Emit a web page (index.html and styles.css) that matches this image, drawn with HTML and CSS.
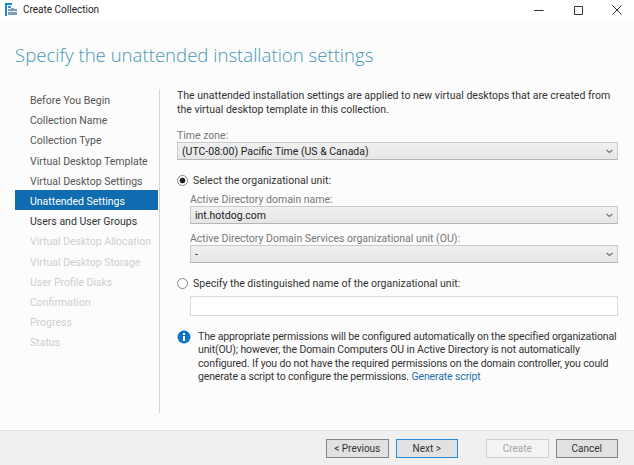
FILE: index.html
```html
<!DOCTYPE html>
<html lang="en">
<head>
    <meta charset="UTF-8">
    <meta name="viewport" content="width=device-width, initial-scale=1.0">
    <title>Create Collection</title>
    <link rel="stylesheet" href="styles.css">
</head>
<body>
    <div class="wizard">
        <div class="titlebar">
            <svg class="app-icon" width="13" height="13" viewBox="0 0 13 13">
                <path d="M0 0h7v2H2v11H0z" fill="#1f86d2"/>
                <path d="M3 3h3v2H3z" fill="#2f93dc"/>
                <path d="M6 6V5h3v1h3v6H3V6z" fill="#7f9db3"/>
                <path d="M3 8h9v1H3z" fill="#dfe8ee"/>
            </svg>
            <span class="titlebar-text">Create Collection</span>
            <div class="window-buttons">
                <svg width="10" height="10" viewBox="0 0 10 10"><path d="M0 5.5h9.500" stroke="#333" fill="none"/></svg>
                <svg width="10" height="10" viewBox="0 0 10 10"><path d="M1.500 1.500h8v8h-8z" stroke="#333" fill="none"/></svg>
                <svg width="10" height="10" viewBox="0 0 10 10"><path d="M.5.5l9 9M9.500.5l-9 9" stroke="#333" fill="none"/></svg>
            </div>
        </div>

        <div class="content">
            <h1>Specify the unattended installation settings</h1>
            <div class="columns">
                <ul class="steps">
                    <li>Before You Begin</li>
                    <li>Collection Name</li>
                    <li>Collection Type</li>
                    <li>Virtual Desktop Template</li>
                    <li>Virtual Desktop Settings</li>
                    <li class="current">Unattended Settings</li>
                    <li class="next">Users and User Groups</li>
                    <li class="off">Virtual Desktop Allocation</li>
                    <li class="off">Virtual Desktop Storage</li>
                    <li class="off">User Profile Disks</li>
                    <li class="off">Confirmation</li>
                    <li class="off">Progress</li>
                    <li class="off">Status</li>
                </ul>

                <div class="panel">
                    <p class="intro">The unattended installation settings are applied to new virtual desktops that are created from the virtual desktop template in this collection.</p>

                    <div class="field tz">
                        <div class="field-label">Time zone:</div>
                        <div class="combo">(UTC-08:00) Pacific Time (US &amp; Canada)<svg class="chev" width="7" height="5" viewBox="0 0 7 5"><path d="M.5 1l3 2.500L6.500 1" stroke="#777" stroke-width="1.300" fill="none"/></svg></div>
                    </div>

                    <div class="radio-row first">
                        <span class="radio checked"></span>
                        <span>Select the organizational unit:</span>
                    </div>
                    <div class="indent">
                        <div class="field">
                            <div class="field-label">Active Directory domain name:</div>
                            <div class="combo">int.hotdog.com<svg class="chev" width="7" height="5" viewBox="0 0 7 5"><path d="M.5 1l3 2.500L6.500 1" stroke="#777" stroke-width="1.300" fill="none"/></svg></div>
                        </div>
                        <div class="field second">
                            <div class="field-label">Active Directory Domain Services organizational unit (OU):</div>
                            <div class="combo">-<svg class="chev" width="7" height="5" viewBox="0 0 7 5"><path d="M.5 1l3 2.500L6.500 1" stroke="#777" stroke-width="1.300" fill="none"/></svg></div>
                        </div>
                    </div>

                    <div class="radio-row another">
                        <span class="radio"></span>
                        <span>Specify the distinguished name of the organizational unit:</span>
                    </div>
                    <div class="indent">
                        <div class="textbox"></div>
                    </div>

                    <div class="note">
                        <svg class="info" width="14" height="14" viewBox="0 0 14 14">
                            <circle cx="7" cy="7" r="6.500" fill="#0f73c4"/>
                            <rect x="6" y="3" width="2" height="2" fill="#fff"/>
                            <rect x="6" y="6" width="2" height="5" fill="#fff"/>
                        </svg>
                        <p>The appropriate permissions will be configured automatically on the specified organizational unit(OU); however, the Domain Computers OU in Active Directory is not automatically configured. If you do not have the required permissions on the domain controller, you could generate a script to configure the permissions. <a href="#">Generate script</a></p>
                    </div>
                </div>
            </div>
        </div>

        <div class="footer">
            <button class="btn" type="button">&lt; Previous</button>
            <button class="btn default" type="button">Next &gt;</button>
            <button class="btn disabled create" type="button">Create</button>
            <button class="btn" type="button">Cancel</button>
        </div>
    </div>
</body>
</html>
```

FILE: styles.css
```css
* {
    box-sizing: border-box;
}

html, body {
    margin: 0;
    height: 100%;
}

body {
    font-family: Roboto, "Open Sans", sans-serif;
    font-size: 10.5px;
    color: #333;
    background-color: #fcfcfc;
    overflow: hidden;
}

.wizard {
    display: flex;
    flex-direction: column;
    height: 465px;
}

.titlebar {
    display: flex;
    align-items: center;
    height: 22px;
    flex: none;
    padding: 0 0 3px 5px;
    background-color: #fff;
    color: #222;
}

.titlebar-text {
    margin-left: 5px;
    font-size: 10px;
}

.window-buttons {
    display: flex;
    gap: 29px;
    margin-left: auto;
    margin-right: 12px;
}

.content {
    flex: 1;
    min-height: 0;
}

h1 {
    margin: 20px 0 0 15px;
    font-family: "Open Sans", sans-serif;
    font-size: 18.600px;
    line-height: 26px;
    font-weight: 300;
    color: #4596b3;
}

.columns {
    display: flex;
    margin: 21px 0 0 15px;
}

.steps {
    width: 145px;
    height: 324px;
    flex: none;
    margin: 0;
    padding: 0;
    list-style: none;
    border-right: 1px solid #d5d5d5;
    color: #555;
}

.steps li {
    height: 20.200px;
    line-height: 23px;
    padding-left: 15px;
    white-space: nowrap;
}

.steps .current {
    margin-right: 1px;
    background-color: #0f6cb1;
    color: #fff;
}

.steps .next {
    color: #333;
}

.steps .off {
    color: #cfcfcf;
}

.panel {
    width: 441px;
    margin-left: 17px;
}

.intro {
    margin: 0;
    line-height: 14px;
}

.field-label {
    height: 13px;
    line-height: 14px;
    color: #777;
}

.tz {
    margin-top: 11.500px;
}

.combo {
    position: relative;
    height: 18px;
    padding-left: 4px;
    line-height: 18px;
    border: 1px solid #c9c9c9;
    border-bottom-color: #b5b5b5;
    background: linear-gradient(#f0f0f0, #e6e6e6);
    color: #222;
}

.chev {
    position: absolute;
    right: 4px;
    top: 6px;
}

.radio-row {
    display: flex;
    align-items: center;
    gap: 5px;
    height: 14px;
}

.radio-row.first {
    margin-top: 13.500px;
}

.radio-row.another {
    margin-top: 13px;
}

.radio {
    width: 11px;
    height: 11px;
    border: 1px solid #888;
    border-radius: 50%;
    background-color: #fff;
    flex: none;
}

.radio.checked {
    background: radial-gradient(circle, #222 0 2.500px, #fff 3.200px);
}

.indent {
    margin-left: 13px;
}

.indent .field:first-child {
    margin-top: 6px;
}

.field.second {
    margin-top: 8px;
}

.textbox {
    height: 20px;
    margin-top: 6px;
    border: 1px solid #d9d9d9;
    background-color: #fff;
}

.note {
    display: flex;
    align-items: flex-start;
    gap: 7px;
    margin-top: 14px;
}

.info {
    flex: none;
}

.note p {
    margin: 0;
    line-height: 13.300px;
    letter-spacing: -0.13px;
}

.note a {
    color: #1f6fb0;
    text-decoration: none;
}

.footer {
    display: flex;
    flex: none;
    align-items: flex-start;
    gap: 7px;
    height: 35px;
    padding: 8px 16px 0 326px;
    border-top: 1px solid #e3e3e3;
    background-color: #f0f0f0;
}

.btn {
    width: 63px;
    height: 19px;
    padding: 0;
    font: inherit;
    font-size: 10px;
    line-height: 15px;
    color: #333;
    border: 1px solid #858585;
    background-color: #e1e1e1;
}

.btn.default {
    border-color: #2a8ae0;
}

.btn.disabled {
    color: #a5a5a5;
    border-color: #d0d0d0;
    background-color: #f3f3f3;
}

.btn.create {
    margin-left: 21px;
}
```
